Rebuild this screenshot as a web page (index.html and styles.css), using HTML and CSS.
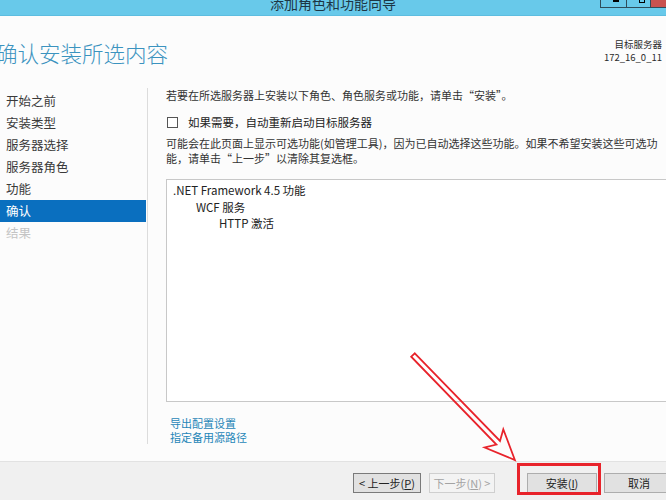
FILE: index.html
```html
<!DOCTYPE html>
<html lang="zh-CN">
<head>
<meta charset="utf-8">
<title>添加角色和功能向导</title>
<link rel="stylesheet" href="styles.css">
</head>
<body>
<div class="window">
  <div class="titlebar">
    <div></div>
    <div class="wtitle">添加角色和功能向导</div>
    <div class="wbtns">
      <span class="wb min"><i></i></span>
      <span class="wb max"><i></i></span>
      <span class="wb close"></span>
    </div>
  </div>
  <div class="header">
    <h1>确认安装所选内容</h1>
    <div class="target">
      <div>目标服务器</div>
      <div>172_16_0_11</div>
    </div>
  </div>
  <div class="main">
    <ul class="nav">
      <li>开始之前</li>
      <li>安装类型</li>
      <li>服务器选择</li>
      <li>服务器角色</li>
      <li>功能</li>
      <li class="active">确认</li>
      <li class="disabled">结果</li>
    </ul>
    <div class="content">
      <p class="intro">若要在所选服务器上安装以下角色、角色服务或功能，请单击“安装”。</p>
      <label class="chk"><span class="cbox"></span>如果需要，自动重新启动目标服务器</label>
      <p class="note">可能会在此页面上显示可选功能(如管理工具)，因为已自动选择这些功能。如果不希望安装这些可选功能，请单击“上一步”以清除其复选框。</p>
      <div class="list">
        <div class="l0">.NET Framework 4.5 功能</div>
        <div class="l1">WCF 服务</div>
        <div class="l2">HTTP 激活</div>
      </div>
      <div class="links">
        <a>导出配置设置</a>
        <a>指定备用源路径</a>
      </div>
    </div>
  </div>
  <div class="footer">
    <button class="btn prev">&lt; 上一步(<u>P</u>)</button>
    <button class="btn next" disabled>下一步(<u>N</u>) &gt;</button>
    <button class="btn install">安装(<u>I</u>)</button>
    <button class="btn cancel">取消</button>
  </div>
  <svg class="annot" width="666" height="500" viewBox="0 0 666 500">
    <polygon points="414.8,353.3 500.0,440.9 503.3,429.3 514.9,460 484.7,447.5 496.4,444.5 411.2,356.7" fill="none" stroke="#e8232b" stroke-width="1.8" stroke-linejoin="miter"/>
    <rect x="518.5" y="464.5" width="81" height="29" fill="none" stroke="#e8232b" stroke-width="3"/>
  </svg>
</div>
</body>
</html>
```

FILE: styles.css
```css
* { box-sizing: border-box; }
html, body { margin: 0; padding: 0; }
body {
  font-family: "Noto Sans CJK SC", "Noto Sans", sans-serif;
  background: #fcfcfc;
}
.window {
  position: relative;
  width: 666px;
  height: 500px;
  overflow: hidden;
  display: flex;
  flex-direction: column;
  background: #fcfcfc;
  color: #333;
}
.titlebar {
  height: 16px;
  flex: none;
  background: #68c9ea;
  border-bottom: 1px solid #5dbde0;
  display: grid;
  grid-template-columns: 1fr auto 1fr;
  align-items: start;
}
.wtitle {
  font-size: 14px;
  line-height: 6px;
  color: #1d3644;
  white-space: nowrap;
}
.wbtns {
  justify-self: end;
  display: flex;
  height: 8px;
}
.wb {
  display: flex;
  justify-content: center;
  align-items: flex-start;
  height: 8px;
  border: 1px solid #2f4d5b;
  border-top: none;
  border-right: none;
}
.wb.min { width: 26px; }
.wb.max { width: 24px; }
.wb.close { width: 16px; background: #c9524f; }
.wb.min i { width: 6px; height: 2px; background: #000; margin-left: 4px; }
.wb.max i { width: 6px; height: 3px; border: 1px solid #000; border-top: none; margin-left: 6px; }

.header {
  height: 72px;
  flex: none;
  display: flex;
  justify-content: space-between;
  align-items: flex-start;
}
.header h1 {
  margin: 22px 0 0 -4px;
  font-size: 21.5px;
  line-height: 30px;
  font-weight: 300;
  color: #3b93bf;
  white-space: nowrap;
}
.target {
  margin: 22px 4px 0 0;
  text-align: right;
  font-size: 9.5px;
  line-height: 13px;
  color: #2b2b2b;
}

.main {
  flex: 1;
  display: flex;
  padding-bottom: 17px;
}
.nav {
  list-style: none;
  margin: 0;
  padding: 2px 0 0 0;
  width: 148px;
  flex: none;
  border-right: 1px solid #dcdcdc;
}
.nav li {
  height: 22px;
  line-height: 22px;
  padding-left: 6px;
  font-size: 12.5px;
  color: #3a3a3a;
  margin-right: 1px;
}
.nav li.active { background: #0a6fbf; color: #fff; }
.nav li.disabled { color: #c4c4c4; }

.content {
  flex: 1;
  min-width: 0;
  padding-left: 18px;
  font-size: 11px;
  color: #333;
}
.intro {
  margin: 0;
  line-height: 15px;
  white-space: nowrap;
}
.chk {
  display: flex;
  align-items: center;
  height: 16px;
  margin-top: 11px;
  font-size: 11.5px;
  color: #222;
}
.cbox {
  width: 11px;
  height: 11px;
  border: 1px solid #555;
  background: #fff;
  margin: 0 10px 0 1px;
}
.note {
  margin: 6px 0 0 0;
  line-height: 15px;
  width: 498px;
}
.list {
  margin-top: 13px;
  height: 223px;
  margin-right: -10px;
  border: 1px solid #c8c8c8;
  background: #fff;
  padding: 2px 0 0 6px;
  font-size: 11.5px;
  line-height: 16.5px;
  color: #222;
}
.list .l1 { padding-left: 23px; }
.list .l2 { padding-left: 46px; }
.links {
  margin-top: 14px;
  padding-left: 4px;
  display: flex;
  flex-direction: column;
  align-items: flex-start;
}
.links a {
  font-size: 11px;
  line-height: 14px;
  color: #1f86b8;
}

.footer {
  height: 39px;
  flex: none;
  background: #f0f0f0;
  border-top: 1px solid #e2e2e2;
  display: flex;
  align-items: flex-start;
  padding: 11px 0 0 353px;
}
.btn {
  flex: none;
  height: 20px;
  padding: 0;
  font-family: "Noto Sans CJK SC", "Noto Sans", sans-serif;
  font-size: 11px;
  line-height: 18px;
  background: #e1e1e1;
  border: 1px solid #adadad;
  color: #222;
  text-align: center;
}
.btn u { text-underline-offset: 1px; }
.btn.prev { width: 68px; border-color: #7a7a7a; }
.btn.next { width: 66px; margin-left: 8px; background: #f3f3f3; border-color: #cfcfcf; color: #a3a3a3; }
.btn.install { width: 70px; margin-left: 32px; }
.btn.cancel { width: 70px; margin-left: 7px; }

.annot {
  position: absolute;
  left: 0;
  top: 0;
  pointer-events: none;
}
```
